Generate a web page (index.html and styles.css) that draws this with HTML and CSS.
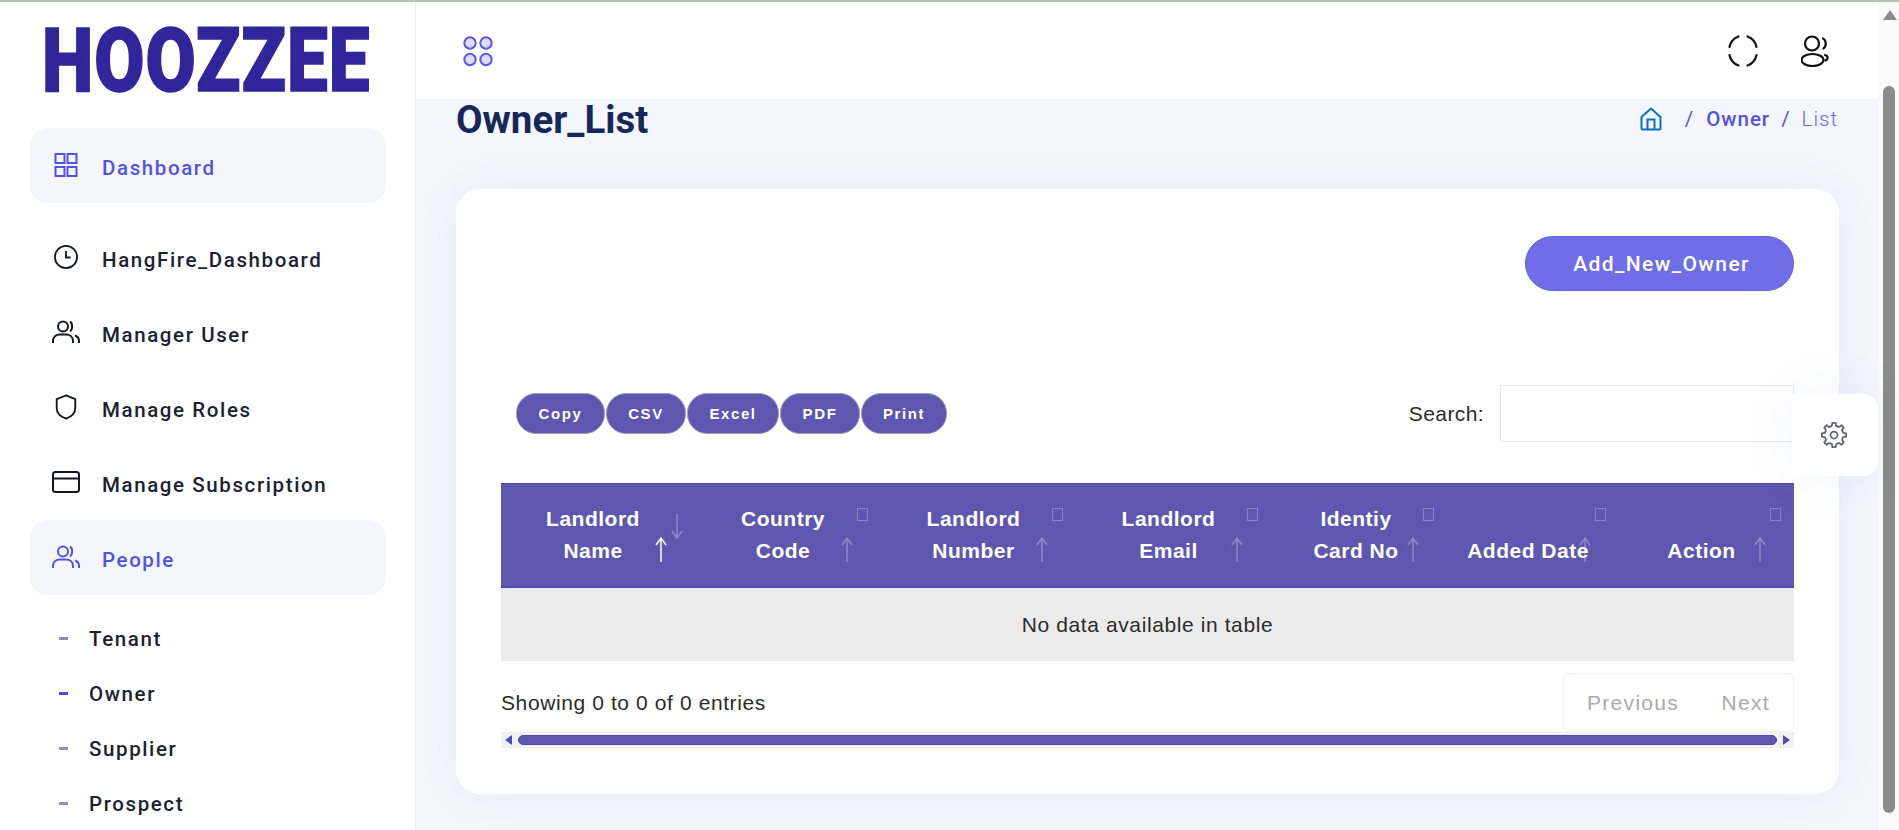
FILE: index.html
```html
<!DOCTYPE html>
<html lang="en">
<head>
<meta charset="UTF-8" />
<meta name="viewport" content="width=device-width, initial-scale=1" />
<title>Owner List</title>
<link rel="stylesheet" href="styles.css">
</head>
<body>

<div class="topline"></div>

<div class="page">

  <div class="sidebar">
    <div class="logo"><span>HOOZZEE</span></div>

    <a class="menu-item active first">
      <svg class="menu-icon" viewBox="0 0 24 24"><rect x="1.500" y="1" width="9" height="9"/><rect x="13.500" y="1" width="9" height="9"/><rect x="1.500" y="14" width="9" height="9"/><rect x="13.500" y="14" width="9" height="9"/></svg>
      Dashboard
    </a>
    <a class="menu-item">
      <svg class="menu-icon" viewBox="0 0 26 26"><circle cx="13" cy="13" r="12"/><path d="M13 6.500V13.500H18"/></svg>
      HangFire_Dashboard
    </a>
    <a class="menu-item">
      <svg class="menu-icon wide" viewBox="0 0 28 24"><circle cx="11" cy="6.500" r="5"/><path d="M18 1.800c2.800 1 2.800 8 0 9.400"/><path d="M1 23v-2c0-4 3-6.500 7-6.500h6c4 0 7 2.500 7 6.500v2"/><path d="M23 15.500c2.600.8 4 2.800 4 5.500v2"/></svg>
      Manager User
    </a>
    <a class="menu-item">
      <svg class="menu-icon" viewBox="0 0 24 28"><path d="M12 1.500L22 5.500V15c0 5.500-4.500 9.500-10 11.500C6.500 24.500 2 20.500 2 15V5.500z"/></svg>
      Manage Roles
    </a>
    <a class="menu-item">
      <svg class="menu-icon wide" viewBox="0 0 28 24"><rect x="1" y="2" width="26" height="20" rx="2.500"/><path d="M1 8.500H27"/></svg>
      Manage Subscription
    </a>
    <a class="menu-item active">
      <svg class="menu-icon wide" viewBox="0 0 28 24"><circle cx="11" cy="6.500" r="5"/><path d="M18 1.800c2.800 1 2.800 8 0 9.400"/><path d="M1 23v-2c0-4 3-6.500 7-6.500h6c4 0 7 2.500 7 6.500v2"/><path d="M23 15.500c2.600.8 4 2.800 4 5.500v2"/></svg>
      People
    </a>

    <div class="submenu">
      <a class="sub-item">Tenant</a>
      <a class="sub-item current">Owner</a>
      <a class="sub-item">Supplier</a>
      <a class="sub-item">Prospect</a>
    </div>
  </div>

  <div class="main">
    <div class="header">
      <svg class="apps-icon" viewBox="0 0 30 32"><circle cx="7" cy="8" r="5.700"/><circle cx="23" cy="8" r="5.700"/><circle cx="7" cy="24.500" r="5.700"/><circle cx="23" cy="24.500" r="5.700"/></svg>
      <div class="header-right">
        <svg class="focus-icon" viewBox="0 0 30 32"><path d="M1.500 12A14 14 0 0 1 10.500 1.500"/><path d="M19.500 1.500A14 14 0 0 1 28.500 12"/><path d="M1.500 20A14 14 0 0 0 10.500 30.500"/><path d="M28.500 20A14 14 0 0 1 19.500 30.500"/></svg>
        <svg class="user-icon" viewBox="0 0 30 32"><circle cx="11" cy="8.500" r="7"/><ellipse cx="11.500" cy="25" rx="11" ry="6"/><path d="M22 3.500c3.500 1.500 3.500 8 .5 10"/><path d="M24 20c3.500 1 3.500 4 .5 5.500"/></svg>
      </div>
    </div>

    <div class="title-row">
      <h1>Owner_List</h1>
      <div class="breadcrumb">
        <svg class="home-icon" viewBox="0 0 22 24"><path d="M1.500 10L11 1.500L20.500 10V21a1.500 1.500 0 0 1-1.500 1.500H3A1.500 1.500 0 0 1 1.500 21z"/><path d="M7.500 22.500V12.500H14.500V22.500"/></svg>
        <span class="crumb-sep first-sep">/</span>
        <span class="crumb-link">Owner</span>
        <span class="crumb-sep">/</span>
        <span class="crumb-last">List</span>
      </div>
    </div>

    <div class="card">
      <div class="card-top">
        <button class="add-btn">Add_New_Owner</button>
      </div>

      <div class="toolbar">
        <div class="export-btns">
          <button>Copy</button>
          <button>CSV</button>
          <button>Excel</button>
          <button>PDF</button>
          <button>Print</button>
        </div>
        <label class="search">Search: <input type="search" /></label>
      </div>

      <table class="owner-table">
        <thead>
          <tr>
            <th class="sorted">Landlord<br>Name
              <svg class="sort-up" viewBox="0 0 12 26"><path d="M6 26V2M1 9L6 2L11 9"/></svg>
              <svg class="sort-down" viewBox="0 0 12 26"><path d="M6 0V24M1 17L6 24L11 17"/></svg>
            </th>
            <th>Country<br>Code
              <svg class="sort-up" viewBox="0 0 12 26"><path d="M6 26V2M1 9L6 2L11 9"/></svg>
            </th>
            <th>Landlord<br>Number
              <svg class="sort-up" viewBox="0 0 12 26"><path d="M6 26V2M1 9L6 2L11 9"/></svg>
            </th>
            <th>Landlord<br>Email
              <svg class="sort-up" viewBox="0 0 12 26"><path d="M6 26V2M1 9L6 2L11 9"/></svg>
            </th>
            <th>Identiy<br>Card No
              <svg class="sort-up" viewBox="0 0 12 26"><path d="M6 26V2M1 9L6 2L11 9"/></svg>
            </th>
            <th>Added Date
              <svg class="sort-up" viewBox="0 0 12 26"><path d="M6 26V2M1 9L6 2L11 9"/></svg>
            </th>
            <th>Action
              <svg class="sort-up" viewBox="0 0 12 26"><path d="M6 26V2M1 9L6 2L11 9"/></svg>
            </th>
          </tr>
        </thead>
        <tbody>
          <tr><td colspan="7">No data available in table</td></tr>
        </tbody>
      </table>

      <div class="table-footer">
        <div class="table-info">Showing 0 to 0 of 0 entries</div>
        <div class="pager"><span>Previous</span><span>Next</span></div>
      </div>

      <div class="table-scroll">
        <span class="arrow-left"></span>
        <span class="table-thumb"></span>
        <span class="arrow-right"></span>
      </div>
    </div>

    <div class="settings-tab">
      <svg class="gear-icon" viewBox="0 0 24 24">
        <path id="tooth" d="M10.200 4.210L10.540 1.600H13.460L13.800 4.210L16.240 5.220"/>
        <use href="#tooth" transform="rotate(45 12 12)"/>
        <use href="#tooth" transform="rotate(90 12 12)"/>
        <use href="#tooth" transform="rotate(135 12 12)"/>
        <use href="#tooth" transform="rotate(180 12 12)"/>
        <use href="#tooth" transform="rotate(225 12 12)"/>
        <use href="#tooth" transform="rotate(270 12 12)"/>
        <use href="#tooth" transform="rotate(315 12 12)"/>
        <circle cx="12" cy="12" r="3"/>
      </svg>
    </div>
  </div>

  <div class="page-scroll">
    <span class="scroll-up"></span>
    <span class="scroll-thumb"></span>
  </div>

</div>

</body>
</html>
```

FILE: styles.css
```css
* {
  box-sizing: border-box;
}
html, body {
  height: 100%;
}
body {
  margin: 0;
  overflow: hidden;
  display: flex;
  flex-direction: column;
  font-family: Roboto, "Liberation Sans", sans-serif;
  background: #f3f6fd;
  color: #1d2230;
}
.topline {
  height: 2px;
  background: #a9c9a9;
  flex-shrink: 0;
}
.page {
  flex: 1;
  display: flex;
  min-height: 0;
}

/* sidebar */
.sidebar {
  width: 416px;
  flex-shrink: 0;
  background: white;
  border-right: 1px solid #eceef6;
  padding: 0 29px 0 30px;
  overflow: hidden;
}
.logo {
  height: 126px;
  padding-left: 12px;
  padding-top: 27px;
}
.logo span {
  display: inline-block;
  font-family: Roboto, sans-serif;
  font-weight: 900;
  font-size: 70px;
  line-height: 64px;
  color: #30259a;
  letter-spacing: 1px;
  transform: scale(1.04, 1.27);
  transform-origin: left center;
  -webkit-text-stroke: 1.2px #30259a;
}
.menu-item {
  height: 75px;
  padding: 5px 0 0 72px;
  position: relative;
  display: flex;
  align-items: center;
  font-size: 20.500px;
  font-weight: 500;
  letter-spacing: 1.600px;
  color: #1d2230;
  border-radius: 18px;
}
.menu-item.first {
  margin-bottom: 17px;
}
.menu-item.active {
  background: #f3f6fd;
  color: #5551e6;
}
.menu-icon {
  position: absolute;
  left: 24px;
  top: 24px;
  width: 24px;
  height: 26px;
  fill: none;
  stroke: currentColor;
  stroke-width: 2;
}
.menu-item:not(.active) .menu-icon {
  stroke: #14171f;
}
.menu-icon.wide {
  left: 22px;
  top: 25px;
  width: 28px;
  height: 24px;
}
.submenu {
  padding-top: 16px;
}
.sub-item {
  height: 55px;
  padding-left: 59px;
  position: relative;
  display: flex;
  align-items: center;
  font-size: 20.500px;
  font-weight: 500;
  letter-spacing: 1.600px;
  color: #1d2230;
}
.sub-item::before {
  content: "";
  position: absolute;
  left: 29px;
  top: 26px;
  width: 9px;
  height: 3px;
  background: #8c92b4;
}
.sub-item.current::before {
  background: #4f4ae4;
}

/* main area */
.main {
  flex: 1;
  min-width: 0;
  position: relative;
}
.header {
  height: 97px;
  background: white;
  display: flex;
  align-items: center;
  justify-content: space-between;
  padding: 0 47px 0 47px;
}
.apps-icon {
  width: 30px;
  height: 32px;
  fill: #dcdcf8;
  stroke: #5b57e6;
  stroke-width: 2;
}
.header-right {
  display: flex;
  align-items: center;
  gap: 43px;
}
.focus-icon, .user-icon {
  width: 30px;
  height: 32px;
  fill: none;
  stroke: #111;
  stroke-width: 2.200;
  stroke-linecap: round;
}
.title-row {
  height: 90px;
  display: flex;
  justify-content: space-between;
  padding: 0 40px;
}
h1 {
  margin: 0;
  font-size: 38.500px;
  font-weight: 700;
  line-height: 42px;
  color: #172759;
}
.breadcrumb {
  display: flex;
  align-items: center;
  height: 40px;
  font-size: 20.500px;
  letter-spacing: 1px;
  color: #5551e6;
}
.home-icon {
  width: 22px;
  height: 24px;
  fill: none;
  stroke: #0a6fc2;
  stroke-width: 2;
  margin-right: 23px;
}
.crumb-sep {
  margin: 0 11px;
}
.crumb-sep.first-sep {
  margin-left: 0;
  margin-right: 12px;
}
.crumb-link {
  font-weight: 500;
}
.crumb-last {
  font-weight: 300;
  color: #6a62e8;
}

/* card */
.card {
  height: 605px;
  margin: 0 39px 0 40px;
  padding: 47px 45px 0 45px;
  background: white;
  border-radius: 24px;
  box-shadow: 0 0 40px rgba(90, 100, 160, 0.08);
}
.card-top {
  display: flex;
  justify-content: flex-end;
  margin-bottom: 94px;
}
.add-btn {
  width: 269px;
  height: 55px;
  padding-left: 10px;
  background: #6f6ee8;
  color: white;
  border: 1px solid #6360dc;
  border-radius: 28px;
  font-family: Roboto, sans-serif;
  font-size: 21px;
  font-weight: 500;
  letter-spacing: 1.400px;
}
.toolbar {
  display: flex;
  align-items: center;
  justify-content: space-between;
  height: 57px;
  margin-bottom: 41px;
  padding-left: 15px;
}
.export-btns {
  display: flex;
  gap: 1px;
}
.export-btns button {
  height: 41px;
  padding: 0;
  background: #5e57b0;
  color: white;
  border: 1px solid #a09db0;
  border-radius: 20px;
  font-family: "Liberation Sans", Arial, sans-serif;
  font-size: 15px;
  font-weight: 700;
  letter-spacing: 1.600px;
}
.export-btns button:nth-child(1) { width: 89px; }
.export-btns button:nth-child(2) { width: 80px; }
.export-btns button:nth-child(3) { width: 92px; }
.export-btns button:nth-child(4) { width: 80px; }
.export-btns button:nth-child(5) { width: 86px; }
.search {
  display: flex;
  align-items: center;
  gap: 16px;
  font-family: "Liberation Sans", Arial, sans-serif;
  font-size: 21px;
  letter-spacing: 0.400px;
  color: #2b2b2b;
}
.search input {
  width: 294px;
  height: 57px;
  background: white;
  border: 1px solid #e8e8ec;
}

/* table */
.owner-table {
  width: 100%;
  border-collapse: collapse;
  table-layout: fixed;
  font-family: "Liberation Sans", Arial, sans-serif;
}
.owner-table th {
  position: relative;
  height: 103px;
  padding: 19px 20px 19px 10px;
  vertical-align: bottom;
  background: #5e57b0;
  border-top: 1px solid #4f46b8;
  border-bottom: 2px solid #4f46b8;
  color: white;
  font-size: 21px;
  font-weight: 700;
  line-height: 32px;
  letter-spacing: 0.500px;
  text-align: center;
}
.owner-table th:nth-child(1) { width: 194px; }
.owner-table th:nth-child(2) { width: 186px; }
.owner-table th:nth-child(3) { width: 195px; }
.owner-table th:nth-child(4) { width: 195px; }
.owner-table th:nth-child(5) { width: 176px; padding-right: 16px; }
.owner-table th:nth-child(6) { width: 172px; padding-right: 10px; padding-left: 0; }
.owner-table th:nth-child(7) { width: 175px; }
/* the box is a glyph the browser could not find */
.owner-table th:not(.sorted)::before {
  content: "";
  position: absolute;
  right: 13px;
  top: 24px;
  width: 9px;
  height: 11px;
  border: 1px solid rgba(255, 255, 255, 0.28);
}
.sort-up, .sort-down {
  position: absolute;
  width: 12px;
  height: 26px;
  fill: none;
  stroke: white;
  stroke-width: 1.500;
  opacity: 0.3;
}
.sort-up {
  right: 28px;
  bottom: 24px;
}
.sort-down {
  right: 12px;
  top: 30px;
}
.sorted .sort-up {
  opacity: 1;
}
.owner-table td {
  height: 74px;
  background: #ebebeb;
  border-top: 2px solid #f3f3f8;
  text-align: center;
  font-size: 21px;
  letter-spacing: 0.600px;
  color: #2b2b2b;
}
.table-footer {
  display: flex;
  justify-content: space-between;
  align-items: center;
  padding-top: 12px;
  font-family: "Liberation Sans", Arial, sans-serif;
  font-size: 21px;
  letter-spacing: 0.600px;
}
.table-info {
  color: #2b2b2b;
}
.pager {
  width: 231px;
  height: 59px;
  display: flex;
  align-items: center;
  justify-content: space-between;
  padding: 0 23px;
  border: 1px solid #f0f0f2;
  border-radius: 6px;
  color: #aaa;
  letter-spacing: 1.300px;
}
.table-scroll {
  height: 16px;
  display: flex;
  align-items: center;
  gap: 6px;
  padding: 0 4px;
  background: #f1f1f1;
}
.table-thumb {
  flex: 1;
  height: 10px;
  background: #5e57b0;
  border: 1px solid #4f46b8;
  border-radius: 5px;
}
.arrow-left {
  border-style: solid;
  border-width: 5px 7px 5px 0;
  border-color: transparent #4f46b8 transparent transparent;
}
.arrow-right {
  border-style: solid;
  border-width: 5px 0 5px 7px;
  border-color: transparent transparent transparent #4f46b8;
}

/* floating settings tab */
.settings-tab {
  position: absolute;
  right: 0;
  top: 392px;
  width: 86px;
  height: 82px;
  padding-right: 2px;
  display: flex;
  align-items: center;
  justify-content: center;
  background: white;
  border-radius: 0 14px 14px 0;
  box-shadow: 0 0 50px rgba(90, 100, 160, 0.08);
}
.gear-icon {
  width: 28px;
  height: 28px;
  fill: none;
  stroke: #5f6570;
  stroke-width: 1.500;
  stroke-linejoin: round;
}

/* page scrollbar */
.page-scroll {
  width: 21px;
  flex-shrink: 0;
  background: #fafafa;
  padding: 8px 4px 0 5px;
}
.scroll-up {
  display: block;
  width: 0;
  margin: 0 auto;
  border-style: solid;
  border-width: 0 7px 10px;
  border-color: transparent transparent #8a8a8a;
}
.scroll-thumb {
  display: block;
  height: 727px;
  margin-top: 66px;
  background: #8a8a8a;
  border-radius: 6px;
}
```
